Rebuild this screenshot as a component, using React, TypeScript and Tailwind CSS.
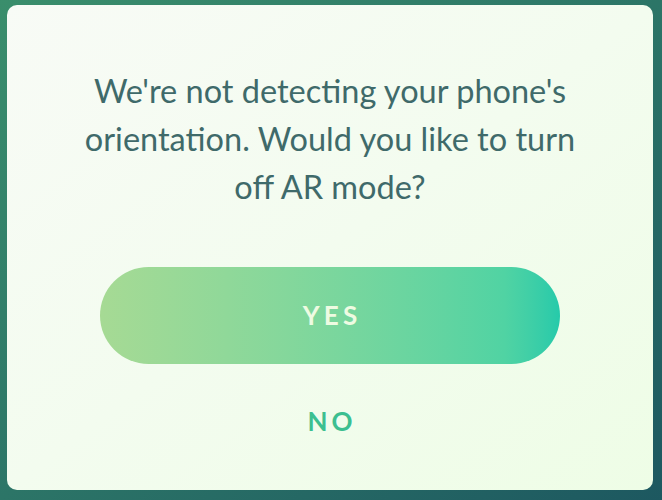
import React from "react";

export default function App() {
  return (
    <div
      className="w-[662px] h-[500px] bg-gradient-to-br from-[#3a8e6c] via-[#2c7567] to-[#1d5860] pt-[5px] pl-[7px]"
      style={{ fontFamily: "Lato, 'Liberation Sans', sans-serif" }}
    >
      <div className="w-[646px] h-[485px] rounded-[10px] bg-gradient-to-br from-[#f8fbf6] via-[#f3fcef] to-[#eefde6] flex flex-col items-center">
        {/* Message */}
        <p className="mt-[62px] w-[498px] text-center text-[32.5px] leading-[48px] text-[#3f6a6a]">
          We're not detecting your phone's orientation. Would you like to turn off AR mode?
        </p>

        {/* Actions */}
        <button className="mt-[56px] w-[460px] h-[97px] rounded-full bg-gradient-to-r from-[#a6da94] via-[#50d3a3] via-88% to-[#25caaa] text-[#eefbe2] text-[26px] font-bold tracking-[0.16em] pl-[0.16em]">
          YES
        </button>
        <button className="mt-[38px] text-[#3cbf90] text-[26px] font-bold tracking-[0.16em] pl-[0.16em]">
          NO
        </button>
      </div>
    </div>
  );
}
